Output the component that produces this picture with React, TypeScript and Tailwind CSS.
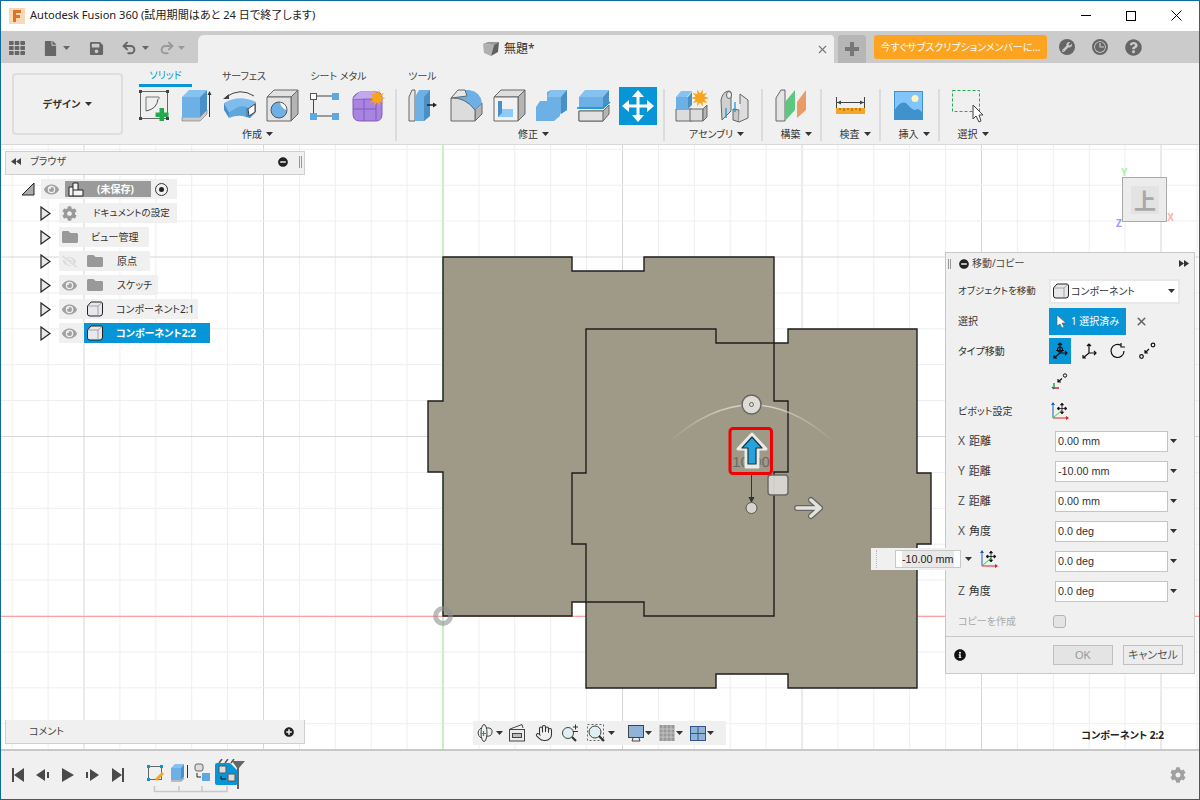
import type { ReactNode } from "react";
import {
  FaCog,
  FaEye,
  FaEyeSlash,
  FaFile,
  FaFolder,
  FaInfoCircle,
  FaMinusCircle,
  FaPlusCircle,
  FaQuestionCircle,
  FaSave,
  FaTh,
  FaWrench,
} from "react-icons/fa";
import { Hand, Redo2, Undo2, X } from "lucide-react";

const BLUE = "#0696d7";

function star(cx: number, cy: number, r: number) {
  const pts: string[] = [];
  for (let i = 0; i < 20; i++) {
    const a = (i * Math.PI) / 10;
    const rr = i % 2 ? r * 0.5 : r;
    pts.push(`${cx + rr * Math.cos(a)},${cy + rr * Math.sin(a)}`);
  }
  return pts.join(" ");
}

function Caret({ color = "#333" }: { color?: string }) {
  return (
    <svg width="7" height="4" viewBox="0 0 7 4" className="shrink-0">
      <polygon points="0,0 7,0 3.5,4" fill={color} />
    </svg>
  );
}

function Slot({ children, w = 43 }: { children: ReactNode; w?: number }) {
  return (
    <svg width={w} height="36" viewBox={`0 0 ${w} 36`} className="shrink-0">
      {children}
    </svg>
  );
}

const edge = { stroke: "#666", strokeWidth: 1, strokeLinejoin: "round" as const };

/* ribbon icons */
function SketchIcon() {
  return (
    <Slot>
      <rect x="6.5" y="3.5" width="27" height="27" fill="none" stroke="#666" />
      {[[5, 2], [32, 2], [5, 29], [32, 29]].map(([x, y]) => (
        <rect key={`${x}-${y}`} x={x} y={y} width="3" height="3" fill="#444" />
      ))}
      <path d="M12 9H25V11M12 9V23" fill="none" stroke="#777" />
      <path d="M24 11Q23 21 12 23" fill="none" stroke="#555" />
      <rect x="25.5" y="20" width="4.5" height="13" fill="#22ac4b" />
      <rect x="21.5" y="24.5" width="13" height="4.5" fill="#22ac4b" />
    </Slot>
  );
}
function ExtrudeIcon() {
  return (
    <Slot>
      <polygon points="5,29 23,29 30,22 30,26 23,33 5,33" fill="#c8c8c8" {...edge} strokeWidth={0.5} />
      <polygon points="5,9 23,9 23,29 5,29" fill="#6cb0e6" />
      <polygon points="5,9 12,2 30,2 23,9" fill="#86c2f0" />
      <polygon points="23,9 30,2 30,22 23,29" fill="#4a90c8" />
      <path d="M32.5 29V5" stroke="#333" />
      <polygon points="32.5,3 30.5,7 34.5,7" fill="#333" />
    </Slot>
  );
}
function RevolveIcon() {
  return (
    <Slot>
      <path d="M6 9Q20 -1 34 8" fill="none" stroke="#444" />
      <polygon points="3,11 9,6 9,11" fill="#444" />
      <path d="M4 15Q19 6 36 14L31 21Q20 16 9 24Z" fill="#7dbcec" />
      <path d="M4 15L9 24V30L4 22Z" fill="#4a90c8" />
      <path d="M9 24Q20 16 26 19V29Q18 26 9 30Z" fill="#5fa6dc" />
      <polygon points="26,19 31,21 36,14 36,24 30,30 26,29" fill="#4a90c8" />
      <polygon points="28,21 35,16 35,24 29,28" fill="#fff" stroke="#444" />
    </Slot>
  );
}
function HoleIcon() {
  return (
    <Slot>
      <polygon points="4,9 11,2 35,2 28,9" fill="#e2e2e2" {...edge} />
      <polygon points="28,9 35,2 35,26 28,33" fill="#b4b4b4" {...edge} />
      <rect x="4" y="9" width="24" height="24" fill="#e4e4e4" {...edge} />
      <circle cx="16" cy="22" r="8" fill="#6cb0e6" stroke="#555" />
      <path d="M17 14.5A8 8 0 0 1 23.5 22Q18 20 17 14.5Z" fill="#fff" />
    </Slot>
  );
}
function PatternIcon() {
  return (
    <Slot>
      <path d="M11 8H26M7.5 11V25M11 28H26" stroke="#444" />
      <rect x="4.5" y="5.5" width="6" height="6" fill="#fff" stroke="#555" />
      <rect x="26" y="5" width="7" height="7" fill="#5ea8e2" />
      <rect x="4" y="25" width="7" height="7" fill="#5ea8e2" />
      <rect x="26" y="25" width="7" height="7" fill="#5ea8e2" />
    </Slot>
  );
}
function PurpleIcon() {
  return (
    <Slot>
      <path d="M11 4H27Q33 4 33 10V26Q33 33 27 33H11Q4 33 4 26V11Q4 7 11 4Z" fill="#a883e0" stroke="#7f5cc0" />
      <path d="M4 21H27M15 10V33M27 10V33M4 11H27" stroke="#7f5cc0" fill="none" />
      <path d="M4 11L10 4H27L33 10H27Z" fill="#c3a8ee" />
      <polygon points={star(28, 10, 8.5)} fill="#f8a51c" />
    </Slot>
  );
}
function PressPullIcon() {
  return (
    <Slot>
      <polygon points="5,9 8,2 11,2 11,33 5,33" fill="#e6e6e6" {...edge} />
      <polygon points="11,9 15,2 26,2 26,28 20,33 11,33" fill="#6cb0e6" />
      <polygon points="20,9 26,2 26,28 20,33" fill="#4a90c8" />
      <path d="M23 17H30" stroke="#222" strokeWidth="1.5" />
      <polygon points="33,17 29,14.5 29,19.5" fill="#222" />
    </Slot>
  );
}
function FilletIcon() {
  return (
    <Slot>
      <polygon points="28,22 35,15 35,26 28,33" fill="#b4b4b4" {...edge} />
      <path d="M4 33V10L11 2H22Q34 4 35 15L28 22Z" fill="#6cb0e6" />
      <path d="M4 33V10Q18 9 28 22V33Z" fill="#dcdcdc" stroke="#666" />
      <path d="M4 10L11 2H18L20 8Q12 9 4 10Z" fill="#e8e8e8" stroke="#666" />
    </Slot>
  );
}
function ShellIcon() {
  return (
    <Slot>
      <polygon points="4,9 11,2 35,2 28,9" fill="#dedede" {...edge} />
      <polygon points="28,9 35,2 35,26 28,33" fill="#b4b4b4" {...edge} />
      <rect x="4" y="9" width="24" height="24" fill="#f2f2f2" {...edge} />
      <rect x="8" y="13" width="15" height="16" fill="#4a90c8" />
      <polygon points="12,21 23,21 23,29 8,29 12,25" fill="#8fcbf8" />
      <rect x="12" y="13" width="11" height="8" fill="#f2f2f2" />
    </Slot>
  );
}
function CombineIcon() {
  return (
    <Slot>
      <polygon points="3,19 7,13 14,13 14,4 18,2 34,2 34,22 27,26 27,28 21,33 3,33" fill="#6cb0e6" />
      <polygon points="14,9 18,2 34,2 28,9" fill="#86c2f0" />
      <polygon points="28,9 34,2 34,22 28,26" fill="#4a90c8" />
    </Slot>
  );
}
function SplitIcon() {
  return (
    <Slot>
      <polygon points="3,9 9,2 33,2 27,9" fill="#86c2f0" />
      <rect x="3" y="9" width="24" height="12" fill="#6cb0e6" />
      <polygon points="27,9 33,2 33,14 27,21" fill="#4a90c8" />
      <polygon points="3,23 27,23 33,17 33,26 27,33 3,33" fill="#b4b4b4" {...edge} />
      <rect x="3" y="23" width="24" height="10" fill="#e2e2e2" {...edge} />
      <path d="M1 20H27L34 14" fill="none" stroke={BLUE} strokeWidth="1.5" />
    </Slot>
  );
}
function MoveIcon() {
  return (
    <svg width="38" height="38" viewBox="0 0 38 38" className="-mt-px shrink-0">
      <rect width="38" height="38" fill={BLUE} />
      <path d="M17.5 9H20.5V17.5H29V20.5H20.5V29H17.5V20.5H9V17.5H17.5Z" fill="#fff" />
      <polygon points="19,3 13,10 25,10" fill="#fff" />
      <polygon points="19,35 13,28 25,28" fill="#fff" />
      <polygon points="3,19 10,13 10,25" fill="#fff" />
      <polygon points="35,19 28,13 28,25" fill="#fff" />
    </svg>
  );
}
function AssemblyIcon() {
  return (
    <Slot>
      <polygon points="4,21 20,21 20,33 4,33" fill="#dcdcdc" {...edge} />
      <rect x="18" y="21" width="13" height="12" fill="#dcdcdc" {...edge} />
      <polygon points="31,21 35,17 35,29 31,33" fill="#b4b4b4" {...edge} />
      <polygon points="4,9 9,3 20,3 15,9" fill="#86c2f0" />
      <rect x="4" y="9" width="12" height="12" fill="#6cb0e6" />
      <polygon points="16,9 20,4 20,17 16,21" fill="#4a90c8" />
      <polygon points={star(28, 10, 9)} fill="#f8a51c" />
    </Slot>
  );
}
function JointIcon() {
  return (
    <Slot>
      <path d="M7 32L6 12Q8 3 14 3Q17 3 16 9V23L7 32Z" fill="#d0d0d0" {...edge} />
      <ellipse cx="14" cy="7" rx="2.5" ry="3.5" fill="#eee" {...edge} />
      <path d="M18 21V32L24 34V22Z" fill="#c8c8c8" {...edge} />
      <path d="M24 34L33 30V12L25 6V16" fill="#ddd" {...edge} />
      <path d="M11 20V30M20 14V24" stroke={BLUE} strokeWidth="1.2" />
    </Slot>
  );
}
function ConstructIcon() {
  return (
    <Slot>
      <polygon points="4,10 9,2 13,2 13,33 4,33" fill="#e4e4e4" {...edge} />
      <polygon points="13,14 23,2 23,22 13,33" fill="#5cc77f" />
      <polygon points="25,14 34,2 34,22 25,30" fill="#ea9a64" />
    </Slot>
  );
}
function RulerIcon() {
  return (
    <Slot>
      <path d="M5.5 9V20M33.5 9V20M6 14.5H33" stroke="#444" fill="none" />
      <polygon points="6,14.5 10,12.5 10,16.5" fill="#444" />
      <polygon points="33,14.5 29,12.5 29,16.5" fill="#444" />
      <rect x="5" y="20" width="29" height="6" fill="#f5a623" />
      <path d="M9 20V22M13 20V23M17 20V22M21 20V23M25 20V22M29 20V23" stroke="#8a5a10" />
    </Slot>
  );
}
function ImageIcon() {
  return (
    <Slot>
      <rect x="4" y="3" width="29" height="29" fill="#81c5fb" />
      <path d="M4 23Q12 10 18 17T27 21Q30 21 33 26V32H4Z" fill="#3f92cc" />
      <circle cx="25" cy="10.5" r="3.5" fill="#fbf6c0" />
      <rect x="4.5" y="3.5" width="28" height="28" fill="none" stroke="#3f92cc" />
    </Slot>
  );
}
function SelectIcon() {
  return (
    <Slot>
      <rect x="3.5" y="2.5" width="27" height="21" fill="none" stroke="#22ac4b" strokeDasharray="3 2" />
      <polygon points="24,17 24,31 27,28 30,34 32,33 30,27 34,27" fill="#fff" stroke="#444" />
    </Slot>
  );
}

function RibbonGroup({
  label,
  width,
  pl,
  labelClass = "",
  children,
}: {
  label: string;
  width: string;
  pl: string;
  labelClass?: string;
  children: ReactNode;
}) {
  return (
    <div className={`${width} ${pl} flex h-full shrink-0 flex-col`}>
      <div className="flex h-[36px] items-start">{children}</div>
      <div className={`flex h-[20px] items-center justify-center gap-[4px] text-[10px] text-[#333] ${labelClass}`}>
        <span>{label}</span>
        <Caret />
      </div>
    </div>
  );
}

function Sep() {
  return <div className="mt-px h-[52px] w-[2px] shrink-0 bg-[#dcdcdc]" />;
}

function Ribbon() {
  return (
    <div className="flex h-[82px] shrink-0 border-b border-[#d8d8d8] bg-[#f0f0f0]">
      <div className="ml-[12px] mt-[10px] flex h-[62px] w-[111px] shrink-0 items-center justify-center gap-[5px] rounded-[4px] border-2 border-[#dedede] text-[10px] font-bold text-[#333]">
        デザイン <Caret />
      </div>
      <div className="ml-[11px] flex flex-col">
        <div className="flex h-[25px] text-[10px] text-[#444]">
          <div className="ml-[5px] flex h-[24px] w-[53px] items-center justify-center border-b-[3px] border-[#0696d7] pt-[3px] text-[#0696d7]">
            ソリッド
          </div>
          <div className="ml-[32px] flex h-[24px] w-[40px] items-center justify-center pt-[3px]">サーフェス</div>
          <div className="ml-[47px] flex h-[24px] w-[55px] items-center justify-center pt-[3px]">シート メタル</div>
          <div className="ml-[43px] flex h-[24px] w-[27px] items-center justify-center pt-[3px]">ツール</div>
        </div>
        <div className="flex h-[56px]">
          <RibbonGroup label="作成" width="w-[261px]" pl="pl-0" labelClass="pr-[14px]">
            <SketchIcon />
            <ExtrudeIcon />
            <RevolveIcon />
            <HoleIcon />
            <PatternIcon />
            <PurpleIcon />
          </RibbonGroup>
          <Sep />
          <RibbonGroup label="修正" width="w-[266px]" pl="pl-[7px]">
            <PressPullIcon />
            <FilletIcon />
            <ShellIcon />
            <CombineIcon />
            <SplitIcon />
            <MoveIcon />
          </RibbonGroup>
          <Sep />
          <RibbonGroup label="アセンブリ" width="w-[96px]" pl="pl-[7px]">
            <AssemblyIcon />
            <JointIcon />
          </RibbonGroup>
          <Sep />
          <RibbonGroup label="構築" width="w-[57px]" pl="pl-[9px]">
            <ConstructIcon />
          </RibbonGroup>
          <Sep />
          <RibbonGroup label="検査" width="w-[57px]" pl="pl-[9px]">
            <RulerIcon />
          </RibbonGroup>
          <Sep />
          <RibbonGroup label="挿入" width="w-[57px]" pl="pl-[9px]">
            <ImageIcon />
          </RibbonGroup>
          <Sep />
          <RibbonGroup label="選択" width="w-[57px]" pl="pl-[9px]">
            <SelectIcon />
          </RibbonGroup>
        </div>
      </div>
    </div>
  );
}

function TitleBar() {
  return (
    <div className="flex h-[31px] shrink-0 items-center bg-white">
      <svg width="16" height="16" viewBox="0 0 16 16" className="ml-[9px] shrink-0">
        <rect width="16" height="16" fill="#f7d9b8" />
        <path d="M4 14V2H12V5H7V7H11V10H7V14Z" fill="#e2722a" />
      </svg>
      <span className="ml-[5px] text-[11.1px] text-[#222]">Autodesk Fusion 360 (試用期間はあと 24 日で終了します)</span>
      <div className="ml-auto flex items-center">
        <div className="h-px w-[10px] bg-black" />
        <div className="ml-[35px] h-[10px] w-[10px] border border-black" />
        <svg width="11" height="11" viewBox="0 0 11 11" className="ml-[35px] mr-[18px]">
          <path d="M.5 .5L10.5 10.5M10.5 .5L.5 10.5" stroke="#000" fill="none" />
        </svg>
      </div>
    </div>
  );
}

function TabBar() {
  return (
    <div className="flex h-[32px] shrink-0 items-end bg-[#cbcbcb]">
      <div className="flex h-[32px] w-[198px] shrink-0 items-center pt-[2px] text-[#666]">
        <FaTh className="ml-[9px]" size={16} />
        <FaFile className="ml-[18px]" size={15} />
        <div className="ml-[5px]"><Caret color="#666" /></div>
        <FaSave className="ml-[19px]" size={15} />
        <Undo2 className="ml-[17px]" size={16} strokeWidth={3} />
        <div className="ml-[5px]"><Caret color="#666" /></div>
        <Redo2 className="ml-[10px] text-[#9a9a9a]" size={16} strokeWidth={3} />
        <div className="ml-[3px]"><Caret color="#999" /></div>
      </div>
      <div className="flex h-[28px] w-[636px] shrink-0 items-center rounded-tl-[6px] rounded-tr-[4px] bg-[#f0f0f0] pl-[285px]">
        <svg width="16" height="16" viewBox="0 0 16 16" className="shrink-0">
          <polygon points="0,3 5,1 16,1 11,4" fill="#999" />
          <polygon points="0,3 11,4 8,15 1,12" fill="#b0b0b0" />
          <polygon points="11,4 16,1 15,11 8,15" fill="#606060" />
        </svg>
        <span className="ml-[5px] text-[12px] text-[#333]">無題*</span>
        <X className="ml-auto mr-[5px] text-[#777]" size={13} strokeWidth={2} />
      </div>
      <div className="ml-[4px] flex h-[28px] w-[28px] shrink-0 items-center justify-center rounded-t-[3px] bg-[#b6b6b6]">
        <svg width="14" height="14" viewBox="0 0 14 14">
          <path d="M5 0H9V5H14V9H9V14H5V9H0V5H5Z" fill="#777" />
        </svg>
      </div>
      <div className="mb-[4px] ml-[8px] flex h-[24px] w-[173px] shrink-0 items-center justify-center rounded-[3px] bg-[#fca420] text-[10px] text-white">
        今すぐサブスクリプションメンバーに...
      </div>
      <div className="mb-[7px] ml-[12px] flex h-[18px] items-center text-[#666]">
        <div className="flex h-[16px] w-[16px] items-center justify-center rounded-full bg-[#666]">
          <FaWrench size={10} className="text-[#cbcbcb]" />
        </div>
        <div className="ml-[17px] flex h-[16px] w-[16px] items-center justify-center rounded-full border-2 border-[#666] bg-[#666] ring-1 ring-[#cbcbcb] ring-inset">
          <svg width="8" height="8" viewBox="0 0 8 8">
            <path d="M4 0V4H8" stroke="#cbcbcb" strokeWidth="1.2" fill="none" />
          </svg>
        </div>
        <FaQuestionCircle size={17} className="ml-[17px]" />
      </div>
    </div>
  );
}

function Scene() {
  const xs: number[] = [];
  for (let k = -13; k <= 21; k++) xs.push(443 + k * 35.9);
  const ys: number[] = [];
  for (let k = -13; k <= 4; k++) ys.push(616 + k * 35.9);
  const A =
    "443,257 572,257 572,271 644,271 644,257 774,257 774,401 788,401 788,472 774,472 774,616 644,616 644,602 572,602 572,616 443,616 443,472 428,472 428,401 443,401";
  const B =
    "586,329 716,329 716,343 788,343 788,329 917,329 917,473 931,473 931,544 917,544 917,688 788,688 788,674 716,674 716,688 586,688 586,544 572,544 572,473 586,473";
  return (
    <svg width="1200" height="604" viewBox="0 145 1200 604" className="absolute inset-0">
      <defs>
        <linearGradient id="arcFade" x1="667" x2="836" y1="0" y2="0" gradientUnits="userSpaceOnUse">
          <stop offset="0" stopColor="#d6d4cc" stopOpacity="0" />
          <stop offset="0.35" stopColor="#d6d4cc" stopOpacity="0.9" />
          <stop offset="0.65" stopColor="#d6d4cc" stopOpacity="0.9" />
          <stop offset="1" stopColor="#d6d4cc" stopOpacity="0" />
        </linearGradient>
      </defs>
      <rect x="0" y="145" width="1200" height="604" fill="#fff" />
      {xs.map((x, i) => (
        <path key={x} d={`M${x} 145V749`} stroke={(i - 13) % 5 === 0 ? "#d6d6d6" : "#eeeeee"} />
      ))}
      {ys.map((y, i) => (
        <path key={y} d={`M0 ${y}H1200`} stroke={(i - 13) % 5 === 0 ? "#d6d6d6" : "#eeeeee"} />
      ))}
      <path d="M443 145V749" stroke="#a6f0a6" />
      <path d="M0 616.5H1200" stroke="#ffa0a0" />
      <polygon points={A} fill="#9f9987" />
      <polygon points={B} fill="#9f9987" />
      <polygon points={A} fill="none" stroke="#1e1e1e" strokeWidth="1.4" />
      <polygon points={B} fill="none" stroke="#1e1e1e" strokeWidth="1.4" />
      <circle cx="443" cy="616" r="7.5" fill="none" stroke="#8f8f8f" strokeWidth="5" opacity="0.6" />

      {/* move manipulator */}
      <path d="M667 444Q752 366 836 444" fill="none" stroke="url(#arcFade)" strokeWidth="1.5" />
      <circle cx="751.5" cy="404.5" r="9.5" fill="#dedcd5" stroke="#666" strokeWidth="1.5" />
      <circle cx="751.5" cy="404.5" r="2" fill="none" stroke="#666" />
      <path d="M751.5 475V500" stroke="#333" />
      <polygon points="751.5,503 748.5,497 754.5,497" fill="#333" />
      <circle cx="751.5" cy="508" r="5.5" fill="#d6d4cc" stroke="#555" />
      <rect x="768" y="475" width="20" height="20" rx="3" fill="#d9d7d0" fillOpacity="0.95" stroke="#6a6a6a" strokeWidth="1.5" />
      <path d="M797 508H820M811 500L820 508L811 516" fill="none" stroke="#666" strokeWidth="6" strokeLinejoin="round" strokeLinecap="round" />
      <path d="M797 508H820M811 500L820 508L811 516" fill="none" stroke="#e4e2dc" strokeWidth="3.5" strokeLinejoin="round" strokeLinecap="round" />
      <text x="751" y="467" textAnchor="middle" fontSize="15" fill="#6a6a6a" fontFamily="Liberation Sans">
        10.00
      </text>
      <path d="M752 434L738 449H746V467H758V449H766Z" fill="#ecebe6" stroke="#ecebe6" strokeWidth="3" strokeLinejoin="round" />
      <path d="M752 437L742 448H748V464H756V448H762Z" fill="#26a4da" stroke="#17364a" strokeWidth="1.2" strokeLinejoin="round" />
      <rect x="730" y="428.5" width="41.5" height="45" rx="3" fill="none" stroke="#f00000" strokeWidth="3" />
    </svg>
  );
}

function Triangle() {
  return (
    <svg width="11" height="15" viewBox="0 0 11 15" className="shrink-0">
      <polygon points="1,1 10,7.5 1,14" fill="#e8e8e8" stroke="#222" strokeWidth="1.2" />
    </svg>
  );
}

function BoxIcon({ size = 16 }: { size?: number }) {
  return (
    <svg width={size} height={size} viewBox="0 0 16 16" className="shrink-0">
      <path d="M4 1H14Q15.5 1 15.5 3V12Q15.5 15 13 15H3Q.5 15 .5 13V5Z" fill="#e8e8ec" stroke="#222" />
      <path d="M.5 5H11L15 1.5M11 5V15" fill="none" stroke="#888" strokeWidth="0.7" />
    </svg>
  );
}

function TreeRow({ children, width }: { children: ReactNode; width: string }) {
  return (
    <div className="flex h-[24px] items-center pl-[40px]">
      <Triangle />
      <div className={`ml-[8px] ${width} flex h-[20px] items-center bg-[#f0f0f0] text-[10px] text-[#333]`}>{children}</div>
    </div>
  );
}

function Browser() {
  return (
    <div className="absolute left-[5px] top-[6px] w-[300px]">
      <div className="flex h-[24px] items-center border border-[#cfcfcf] bg-[#f0f0f0] pb-[3px] text-[10px] text-[#444]">
        <svg width="10" height="7" viewBox="0 0 10 7" className="ml-[5px]">
          <polygon points="0,3.5 5,0 5,7" fill="#444" />
          <polygon points="5,3.5 10,0 10,7" fill="#444" />
        </svg>
        <span className="ml-[9px]">ブラウザ</span>
        <FaMinusCircle size={10} className="ml-auto mr-[11px] text-[#222]" />
        <div className="mr-[2px] h-[12px] w-[3px] border-x border-[#999]" />
      </div>
      <div className="-ml-[5px] mt-[2px]">
        <div className="flex h-[24px] items-center pl-[21px]">
          <svg width="14" height="14" viewBox="0 0 14 14" className="shrink-0">
            <polygon points="1,13 13,13 13,1" fill="#aaa" stroke="#222" strokeWidth="1" />
          </svg>
          <div className="ml-[6px] flex h-[20px] w-[136px] items-center bg-[#f0f0f0]">
            <FaEye size={15} className="ml-[3px] text-[#a0a0a0]" />
            <div className="ml-[6px] flex h-[16px] w-[86px] items-center bg-[#9a9a9a] pl-[3px] text-[10px] font-bold text-white">
              <svg width="16" height="15" viewBox="0 0 16 15" className="shrink-0">
                <path d="M1 14V5H5V1H10V8H15V14Z" fill="#f4f4f4" stroke="#222" />
                <path d="M5 5V8H10M5 8V14" stroke="#222" fill="none" />
              </svg>
              <span className="ml-[13px]">(未保存)</span>
            </div>
            <div className="ml-[4px] flex h-[13px] w-[13px] items-center justify-center rounded-full border border-[#333]">
              <div className="h-[5px] w-[5px] rounded-full bg-[#222]" />
            </div>
          </div>
        </div>
        <TreeRow width="w-[118px]">
          <FaCog size={15} className="ml-[3px] text-[#999]" />
          <span className="ml-[16px] text-[9.5px]">ドキュメントの設定</span>
        </TreeRow>
        <TreeRow width="w-[90px]">
          <FaFolder size={16} className="ml-[3px] text-[#999]" />
          <span className="ml-[13px]">ビュー管理</span>
        </TreeRow>
        <TreeRow width="w-[91px]">
          <FaEyeSlash size={15} className="ml-[3px] text-[#dcdcdc]" />
          <FaFolder size={16} className="ml-[10px] text-[#999]" />
          <span className="ml-[14px]">原点</span>
        </TreeRow>
        <TreeRow width="w-[99px]">
          <FaEye size={15} className="ml-[3px] text-[#a0a0a0]" />
          <FaFolder size={16} className="ml-[10px] text-[#999]" />
          <span className="ml-[14px]">スケッチ</span>
        </TreeRow>
        <TreeRow width="w-[139px]">
          <FaEye size={15} className="ml-[3px] text-[#a0a0a0]" />
          <div className="ml-[10px]"><BoxIcon /></div>
          <span className="ml-[13px]">コンポーネント2:1</span>
        </TreeRow>
        <TreeRow width="w-[151px]">
          <FaEye size={15} className="ml-[3px] text-[#a0a0a0]" />
          <div className="ml-[7px] flex h-[20px] flex-1 items-center bg-[#0696d7] pl-[3px] font-bold text-white">
            <BoxIcon />
            <span className="ml-[13px]">コンポーネント2:2</span>
          </div>
        </TreeRow>
      </div>
    </div>
  );
}

function ViewCube() {
  return (
    <div className="absolute left-[1122px] top-[32px] h-[45px] w-[45px] border border-[#aaa] bg-[#ececec]">
      <div className="m-[8px] flex h-[28px] w-[28px] items-center justify-center bg-[#e3e3e3] text-[22px] font-bold text-[#a8a8a8]">
        上
      </div>
      <span className="absolute -left-[2px] -top-[13px] text-[10px] font-bold text-[#a8f0a8]">Y</span>
      <span className="absolute -right-[8px] top-[32px] text-[10px] font-bold text-[#ffb0b0]">X</span>
      <span className="absolute -left-[7px] top-[38px] text-[10px] font-bold text-[#9a9aff]">Z</span>
    </div>
  );
}

function TriadIcon({ move = true }: { move?: boolean }) {
  return (
    <svg width="18" height="18" viewBox="0 0 18 18" className="shrink-0">
      <path d="M2 1V16" stroke="#1a5fb4" />
      <polygon points="2,0 0,3 4,3" fill="#1a5fb4" />
      <path d="M2 16H17" stroke="#e02020" />
      <polygon points="18,16 15,14 15,18" fill="#e02020" />
      <path d="M2 16L11 8" stroke="#30d040" />
      {move && <path d="M11 3V10M7.5 6.5H14.5M11 1L9.5 3H12.5ZM11 12L9.5 10H12.5ZM6 6.5L8 5V8ZM16 6.5L14 5V8Z" fill="#111" stroke="#111" strokeWidth="0.8" />}
    </svg>
  );
}

function FieldRow({ axis, label, value }: { axis?: string; label?: string; value: string }) {
  return (
    <div className="flex h-[30px] items-center pl-[12px]">
      <div className="w-[97px] shrink-0 text-[11px] text-[#333]">
        {axis && <span className="mr-[1px] text-[12px] text-[#555]">{axis}</span>} {label}
      </div>
      <div className="flex h-[21px] w-[113px] shrink-0 items-center border border-[#c4c4c4] bg-white pl-[2px] font-['Liberation_Sans',sans-serif] text-[10.8px] text-[#333]">
        {value}
      </div>
      <div className="ml-[2px]"><Caret color="#333" /></div>
    </div>
  );
}

function TypeIcon({ children, active = false }: { children: ReactNode; active?: boolean }) {
  return (
    <div className={`flex h-[26px] w-[22px] shrink-0 items-center justify-center ${active ? "bg-[#0696d7]" : ""}`}>
      <svg width="18" height="18" viewBox="0 0 18 18" fill="none" stroke="#111" strokeWidth="1.2">
        {children}
      </svg>
    </div>
  );
}

function MovePanel() {
  return (
    <div className="absolute left-[945px] top-[107px] h-[422px] w-[250px] border border-[#c8c8c8] bg-[#f0f0f0] text-[#333]">
      <div className="flex h-[21px] items-center text-[10px] text-[#444]">
        <div className="ml-[2px] h-[10px] w-[3px] border-x border-[#999]" />
        <FaMinusCircle size={10} className="ml-[8px] text-[#222]" />
        <span className="ml-[3px]">移動/コピー</span>
        <svg width="10" height="7" viewBox="0 0 10 7" className="ml-auto mr-[5px]">
          <polygon points="0,0 5,3.5 0,7" fill="#333" />
          <polygon points="5,0 10,3.5 5,7" fill="#333" />
        </svg>
      </div>
      <div className="pt-[2px]">
        <div className="flex h-[30px] items-center pl-[12px]">
          <div className="w-[91px] shrink-0 text-[9.5px]">オブジェクトを移動</div>
          <div className="flex h-[25px] w-[131px] shrink-0 items-center border-2 border-[#e8e8e8] bg-white pl-[2px] text-[10px]">
            <BoxIcon />
            <span className="ml-[2px]">コンポーネント</span>
            <div className="ml-auto mr-[3px]"><Caret /></div>
          </div>
        </div>
        <div className="flex h-[30px] items-center pl-[12px]">
          <div className="w-[91px] shrink-0 text-[10px]">選択</div>
          <div className="flex h-[27px] w-[77px] shrink-0 items-center bg-[#0696d7] pl-[7px] text-[10px] text-white">
            <svg width="11" height="15" viewBox="0 0 11 15" className="shrink-0">
              <polygon points="1,1 1,12 4,10 6,14 8,13 6,9 10,9" fill="#fff" stroke="#555" strokeWidth="0.6" />
            </svg>
            <span className="ml-[4px]">1 選択済み</span>
          </div>
          <X size={13} strokeWidth={3} className="ml-[9px] text-[#666]" />
        </div>
        <div className="flex h-[30px] items-center pl-[12px]">
          <div className="w-[91px] shrink-0 text-[10px]">タイプ移動</div>
          <TypeIcon active>
            <path d="M9 1V11M5 8.5H13M9 11L3 16M9 11H16M7 3L9 1L11 3M3 13V16H6M14 9L16 11L14 13" />
            <circle cx="9" cy="7.5" r="2.5" />
          </TypeIcon>
          <div className="ml-[7px]">
            <TypeIcon>
              <path d="M9 2V11M9 11L3 16M9 11H16M7 4L9 2L11 4M3 13V16H6M14 9L16 11L14 13" />
            </TypeIcon>
          </div>
          <div className="ml-[7px]">
            <TypeIcon>
              <path d="M15 9A6.5 6.5 0 1 1 12 3.5M12 1V5H16" />
            </TypeIcon>
          </div>
          <div className="ml-[7px]">
            <TypeIcon>
              <circle cx="3.5" cy="14.5" r="1.8" />
              <circle cx="15" cy="3" r="1.8" />
              <path d="M7 11L11 7M7 8V11H10" />
            </TypeIcon>
          </div>
        </div>
        <div className="flex h-[30px] items-center pl-[105px]">
          <svg width="18" height="18" viewBox="0 0 18 18" fill="none" className="shrink-0">
            <circle cx="14" cy="3.5" r="1.7" stroke="#111" />
            <path d="M7 10L11 6.5M7 7V10H10" stroke="#111" strokeWidth="1.2" />
            <path d="M3 17V11" stroke="#22aa44" strokeWidth="1.5" />
            <path d="M3 16H8" stroke="#e02020" strokeWidth="1.5" />
            <path d="M1 15L3 17" stroke="#1a5fb4" strokeWidth="1.5" />
          </svg>
        </div>
        <div className="flex h-[30px] items-center pl-[12px]">
          <div className="w-[93px] shrink-0 text-[10px]">ピボット設定</div>
          <TriadIcon />
        </div>
        <FieldRow axis="X" label="距離" value="0.00 mm" />
        <FieldRow axis="Y" label="距離" value="-10.00 mm" />
        <FieldRow axis="Z" label="距離" value="0.00 mm" />
        <FieldRow axis="X" label="角度" value="0.0 deg" />
        <FieldRow value="0.0 deg" />
        <FieldRow axis="Z" label="角度" value="0.0 deg" />
        <div className="flex h-[30px] items-center pl-[12px]">
          <div className="w-[95px] shrink-0 text-[10px] text-[#aaa]">コピーを作成</div>
          <div className="h-[13px] w-[13px] rounded-[3px] border border-[#b4b4b4] bg-[#e4e4e4]" />
        </div>
      </div>
      <div className="flex h-[37px] items-center border-t border-[#c8c8c8]">
        <FaInfoCircle size={12} className="ml-[8px] text-[#111]" />
        <div className="ml-[87px] flex h-[20px] w-[60px] items-center justify-center border border-[#c0c0c0] bg-[#e4e4e4] font-['Liberation_Sans',sans-serif] text-[11px] text-[#999]">
          OK
        </div>
        <div className="ml-[10px] flex h-[20px] w-[60px] items-center justify-center border border-[#c0c0c0] bg-[#ececec] text-[11px] text-[#555]">
          キャンセル
        </div>
      </div>
    </div>
  );
}

function DistanceOverlay() {
  return (
    <div className="absolute left-[871px] top-[403px] flex h-[22px] w-[135px] items-center bg-[#f0f0f0]">
      <div className="ml-[5px] h-[18px] w-[2px] border-l border-dotted border-[#bbb]" />
      <div className="ml-[17px] flex h-[18px] w-[66px] shrink-0 items-center border border-[#c8c8c8] bg-white pl-[6px]">
        <span className="bg-[#e8e8e8] font-['Liberation_Sans',sans-serif] text-[10.8px] leading-[16px] text-[#222]">-10.00 mm</span>
      </div>
      <div className="ml-[4px]"><Caret /></div>
      <div className="ml-[8px]"><TriadIcon /></div>
    </div>
  );
}

function NavBar() {
  return (
    <div className="absolute bottom-[4px] left-[473px] flex h-[24px] w-[253px] items-center bg-[#f0f0f0] text-[#333]">
      <svg width="18" height="20" viewBox="0 0 18 20" fill="none" stroke="#444" className="ml-[3px] shrink-0">
        <ellipse cx="8" cy="10" rx="3" ry="8.5" />
        <path d="M5 5Q-1 10 5 15M10 5Q17 4 16 10Q15 14 10 13" />
        <path d="M5 10.5H10M7.5 8V13" stroke={BLUE} strokeWidth="1.2" />
      </svg>
      <div className="ml-[2px]"><Caret /></div>
      <svg width="17" height="18" viewBox="0 0 17 18" fill="none" stroke="#444" className="ml-[6px] shrink-0">
        <rect x=".5" y="5.5" width="15" height="11.5" fill="#ececec" />
        <rect x="3.5" y="9.5" width="9" height="4" fill="#bbb" />
        <path d="M1 5L13 .5L14 4" />
      </svg>
      <Hand size={18} strokeWidth={1.4} className="ml-[9px] shrink-0" />
      <svg width="18" height="18" viewBox="0 0 18 18" fill="none" className="ml-[8px] shrink-0">
        <circle cx="7" cy="9" r="5.5" fill="#dff0f5" stroke="#444" />
        <path d="M11 13L15 17" stroke="#333" strokeWidth="2.2" />
        <path d="M12 3H17M14.5 .5V5.5M12 7.5H17" stroke="#333" />
      </svg>
      <svg width="18" height="18" viewBox="0 0 18 18" fill="none" className="ml-[8px] shrink-0">
        <rect x=".5" y=".5" width="16" height="16" stroke="#666" strokeDasharray="2 2" />
        <circle cx="8" cy="8" r="6" fill="#dff0f5" stroke="#444" />
        <path d="M12 12L17 17" stroke="#333" strokeWidth="2.2" />
      </svg>
      <div className="ml-[3px]"><Caret /></div>
      <svg width="16" height="17" viewBox="0 0 16 17" className="ml-[13px] shrink-0">
        <rect x=".5" y=".5" width="15" height="12" fill="#8fb4d8" stroke="#444" />
        <path d="M5 13L4 16H12L11 13" fill="#eee" stroke="#444" />
      </svg>
      <div className="ml-[1px]"><Caret /></div>
      <svg width="16" height="16" viewBox="0 0 16 16" className="ml-[7px] shrink-0">
        <rect width="16" height="16" fill="#999" />
        <path d="M.5 0V16M4 0V16M8 0V16M12 0V16M15.5 0V16M0 4H16M0 8H16M0 12H16" stroke="#dcdcdc" strokeWidth="0.6" />
      </svg>
      <div className="ml-[1px]"><Caret /></div>
      <svg width="16" height="15" viewBox="0 0 16 15" className="ml-[7px] shrink-0">
        <rect x=".5" y=".5" width="15" height="14" fill="#8fb4d8" stroke="#33548a" />
        <path d="M8 0V15M0 7.5H16" stroke="#33548a" />
      </svg>
      <div className="ml-[1px]"><Caret /></div>
    </div>
  );
}

function CommentPanel() {
  return (
    <div className="absolute bottom-[5px] left-[5px] flex h-[24px] w-[300px] items-center border-x border-b border-[#cfcfcf] bg-[#f0f0f0] text-[10px] text-[#444]">
      <span className="ml-[23px]">コメント</span>
      <FaPlusCircle size={10} className="ml-auto mr-[10px] text-[#222]" />
    </div>
  );
}

function Timeline() {
  return (
    <div className="flex h-[51px] shrink-0 items-center border-t-2 border-[#c8c8c8] bg-[#f0f0f0] pb-[2px]">
      <svg width="116" height="14" viewBox="0 0 116 14" fill="#4a4a4a" className="ml-[12px] shrink-0">
        <rect x="0" y="0" width="2" height="14" />
        <polygon points="2,7 12,0 12,14" />
        <polygon points="24,7 33,1 33,13" />
        <rect x="35" y="4" width="2" height="6" />
        <polygon points="50,0 62,7 50,14" />
        <rect x="74" y="4" width="2" height="6" />
        <polygon points="78,1 87,7 78,13" />
        <polygon points="100,0 110,7 100,14" />
        <rect x="110" y="0" width="2" height="14" />
      </svg>
      <div className="relative ml-[19px] mt-[8px] h-[40px] w-[110px] shrink-0">
        <svg width="110" height="40" viewBox="0 0 110 40" className="absolute inset-0">
          <path d="M7.5 27V32.5H80V27M32 27V32M55 27V32" fill="none" stroke="#c8c8c8" strokeWidth="1.5" />
          <rect x="1.5" y="7.5" width="13" height="13" fill="none" stroke="#666" />
          <rect x="0" y="6" width="3" height="3" fill={BLUE} />
          <rect x="13" y="6" width="3" height="3" fill={BLUE} />
          <rect x="0" y="19" width="3" height="3" fill={BLUE} />
          <path d="M9 21L16 14" stroke="#f5a623" strokeWidth="3" />
          <rect x="24" y="9" width="10" height="12" fill="#6cb0e6" />
          <polygon points="24,9 28,5 37,5 34,9" fill="#86c2f0" />
          <polygon points="34,9 37,5 37,18 34,21" fill="#4a90c8" />
          <path d="M24 22H34L37 19" stroke="#aaa" fill="none" strokeWidth="1.5" />
          <path d="M40.5 6V19" stroke="#333" />
          <rect x="48" y="5" width="8" height="7" rx="2" fill="#ddd" stroke="#666" />
          <path d="M50 14V18H54" stroke="#222" fill="none" />
          <rect x="55" y="14" width="8" height="8" fill="#5ea8e2" />
          <path d="M72 4L75 0M78 4L81 0M84 4L87 0" stroke="#555" strokeWidth="1.5" />
          <path d="M70 4H83L91 12V24Q91 26 89 26H70Q68 26 68 24V6Q68 4 70 4Z" fill="#0696d7" />
          <rect x="72" y="7" width="7" height="7" rx="1" fill="#ddd" stroke="#555" />
          <rect x="81" y="15" width="7" height="7" rx="1" fill="#ddd" stroke="#555" />
          <path d="M74 17V20H79" fill="none" stroke="#111" />
          <polygon points="85,2 98,2 92,9 92,30 90,30 90,9" fill="#666" />
        </svg>
      </div>
      <FaCog size={16} className="ml-auto mr-[14px] text-[#a0a0a0]" />
    </div>
  );
}

export default function App() {
  return (
    <div className="relative flex h-[800px] w-[1200px] flex-col overflow-hidden whitespace-nowrap bg-white font-['Noto_Sans','Noto_Sans_CJK_JP',sans-serif] [font-feature-settings:'palt']">
      <TitleBar />
      <TabBar />
      <Ribbon />
      <div className="relative h-[604px] shrink-0">
        <Scene />
        <Browser />
        <ViewCube />
        <MovePanel />
        <DistanceOverlay />
        <NavBar />
        <CommentPanel />
        <div className="absolute bottom-[6px] right-[36px] text-[10px] font-bold text-[#222]">コンポーネント 2:2</div>
      </div>
      <Timeline />
      <div className="pointer-events-none absolute inset-0 border border-[#0f6b9c]" />
    </div>
  );
}
